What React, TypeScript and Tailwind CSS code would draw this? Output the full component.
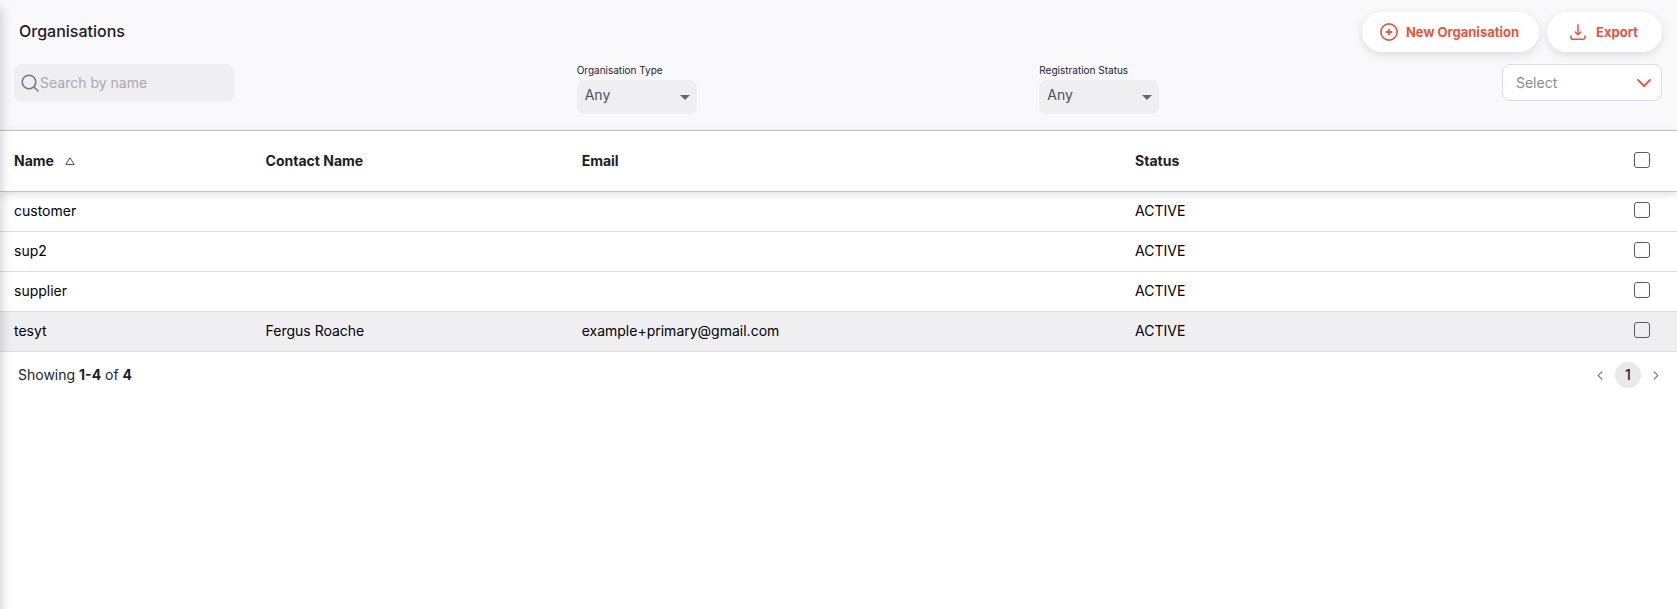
import { useState } from "react";

type Organisation = {
  name: string;
  contact: string;
  email: string;
  status: string;
};

const organisations: Organisation[] = [
  { name: "customer", contact: "", email: "", status: "ACTIVE" },
  { name: "sup2", contact: "", email: "", status: "ACTIVE" },
  { name: "supplier", contact: "", email: "", status: "ACTIVE" },
  { name: "tesyt", contact: "Fergus Roache", email: "example+primary@gmail.com", status: "ACTIVE" },
];

function PlusCircleIcon() {
  return (
    <svg className="size-[18px]" viewBox="0 0 18 18" fill="none" stroke="currentColor" strokeWidth="1.7" strokeLinecap="round" aria-hidden="true">
      <circle cx="9" cy="9" r="8.1" />
      <path d="M9 6.4v5.2M6.4 9h5.2" strokeWidth="1.8" />
    </svg>
  );
}

function DownloadIcon() {
  return (
    <svg className="size-4" viewBox="0 0 16 16" fill="none" stroke="currentColor" strokeWidth="1.5" strokeLinecap="round" strokeLinejoin="round" aria-hidden="true">
      <path d="M8 .8v9.8M5.2 8 8 10.8 10.8 8" />
      <path d="M1 12v1.4a1.8 1.8 0 0 0 1.8 1.8h10.4a1.8 1.8 0 0 0 1.8-1.8V12" />
    </svg>
  );
}

function SearchIcon() {
  return (
    <svg className="size-[18px] shrink-0 text-[#77758c]" viewBox="0 0 18 18" fill="none" stroke="currentColor" strokeWidth="1.6" strokeLinecap="round" aria-hidden="true">
      <circle cx="8" cy="8" r="6.8" />
      <path d="m13 13 4 4" />
    </svg>
  );
}

function FilterSelect({ id, label }: { id: string; label: string }) {
  return (
    <div className="flex w-[120px] flex-col">
      <label htmlFor={id} className="pb-1 text-[10px] leading-3 whitespace-nowrap text-[#23222e]">
        {label}
      </label>
      <div className="relative">
        <select
          id={id}
          className="block h-[34px] w-full appearance-none rounded-lg bg-[#efeff1] pr-6 pb-1 pl-2 text-sm text-[#4e4b66]"
        >
          <option>Any</option>
        </select>
        <svg className="pointer-events-none absolute top-[15px] right-[7px] h-[5px] w-[10px] text-[#666]" viewBox="0 0 10 5" fill="currentColor" aria-hidden="true">
          <path d="M0 0h10L5 5z" />
        </svg>
      </div>
    </div>
  );
}

const checkboxClass =
  "block size-4 appearance-none rounded-[3px] border border-[#5a5a5a] bg-transparent checked:bg-[#e2583e]";
const pillClass =
  "flex h-10 items-center rounded-full bg-white text-[13px] font-bold text-[#e2583e] shadow-[0_3px_8px_rgba(20,20,43,0.13)]";

export default function App() {
  const [selected, setSelected] = useState<string[]>([]);
  const allSelected = selected.length === organisations.length;

  const toggle = (name: string) =>
    setSelected((current) =>
      current.includes(name) ? current.filter((item) => item !== name) : [...current, name],
    );

  return (
    <main className="relative min-h-screen overflow-hidden bg-white font-['Inter',sans-serif] text-sm text-black">
      <div
        aria-hidden="true"
        className="pointer-events-none absolute top-2 -bottom-4 -left-4 z-10 w-4 shadow-[0_0_12px_rgba(20,20,43,0.26)]"
      />

      <header className="h-[131px] border-b border-[#c3c3c8] bg-[#f9f9fc] pt-3 pr-[15px] pl-[14px]">
        <div className="flex items-center justify-between pl-[5px]">
          <h1 className="pb-[2px] text-base font-medium text-[#1d1d22]">Organisations</h1>
          <div className="flex gap-2">
            <button type="button" className={`${pillClass} gap-2 pr-5 pl-[18px]`}>
              <PlusCircleIcon />
              New Organisation
            </button>
            <button type="button" className={`${pillClass} gap-[10px] pr-6 pl-[23px]`}>
              <DownloadIcon />
              Export
            </button>
          </div>
        </div>

        <div className="mt-3 flex items-start justify-between">
          <div className="flex h-[38px] w-[220px] items-center rounded-lg bg-[#efeff1] pl-[7px]">
            <SearchIcon />
            <input
              type="text"
              aria-label="Search by name"
              placeholder="Search by name"
              className="h-full w-full min-w-0 bg-transparent pb-[2px] pl-px text-sm outline-none placeholder:text-[#a9a8b6]"
            />
          </div>
          <FilterSelect id="organisation-type" label="Organisation Type" />
          <FilterSelect id="registration-status" label="Registration Status" />
          <div className="relative w-[160px]">
            <select
              aria-label="Select"
              className="block h-[37px] w-full appearance-none rounded-lg border border-[#d9dbe9] bg-white pr-8 pl-[13px] text-sm text-[#8a889c]"
            >
              <option>Select</option>
            </select>
            <svg className="pointer-events-none absolute top-[15px] right-[11px] h-2 w-[14px] text-[#e2583e]" viewBox="0 0 14 8" fill="none" stroke="currentColor" strokeWidth="1.8" strokeLinecap="round" strokeLinejoin="round" aria-hidden="true">
              <path d="m1 1 6 6 6-6" />
            </svg>
          </div>
        </div>
      </header>

      <table className="w-full table-fixed border-separate border-spacing-0 text-left">
        <colgroup>
          <col className="w-[15%]" />
          <col className="w-[18.85%]" />
          <col className="w-[33%]" />
          <col />
          <col className="w-[57px]" />
        </colgroup>
        <thead className="relative shadow-[0_2px_8px_rgba(20,20,43,0.14)] [&_th]:h-[61px] [&_th]:border-b [&_th]:border-[#c3c3c8] [&_th]:bg-white [&_th]:px-[14px] [&_th]:font-bold [&_th]:text-[#1d1d22] [&_th:last-child]:pb-[3px]">
          <tr>
            <th scope="col" aria-sort="ascending">
              <button type="button" className="flex items-center gap-[11px] font-bold">
                Name
                <svg className="h-2 w-[10px] text-[#4e4b66]" viewBox="0 0 10 8" fill="none" stroke="currentColor" strokeLinejoin="round" aria-hidden="true">
                  <path d="M5 .8 9.2 7.4H.8z" />
                </svg>
              </button>
            </th>
            <th scope="col">Contact Name</th>
            <th scope="col">Email</th>
            <th scope="col">Status</th>
            <th scope="col">
              <input
                type="checkbox"
                aria-label="Select all organisations"
                className={checkboxClass}
                checked={allSelected}
                onChange={() => setSelected(allSelected ? [] : organisations.map((o) => o.name))}
              />
            </th>
          </tr>
        </thead>
        <tbody className="[&_td]:h-10 [&_td]:border-b [&_td]:border-[#dcdce2] [&_td]:px-[14px] [&_td]:pb-[2px] [&_td:last-child]:pb-[3px] [&_tr:last-child]:bg-[#efeff2]">
          {organisations.map((o) => (
            <tr key={o.name}>
              <td>{o.name}</td>
              <td>{o.contact}</td>
              <td>{o.email}</td>
              <td>{o.status}</td>
              <td>
                <input
                  type="checkbox"
                  aria-label={`Select ${o.name}`}
                  className={checkboxClass}
                  checked={selected.includes(o.name)}
                  onChange={() => toggle(o.name)}
                />
              </td>
            </tr>
          ))}
        </tbody>
      </table>

      <footer className="flex items-center justify-between pt-[10px] pr-[14px] pl-[18px] text-[#1d1d2b]">
        <p>
          Showing <b>1-4</b> of <b>4</b>
        </p>
        <nav aria-label="Pagination" className="flex items-center gap-2">
          <button type="button" aria-label="Previous page" className="flex w-[14px] justify-center text-[#8c8c8c]">
            <svg className="h-[9px] w-[6px]" viewBox="0 0 6 9" fill="none" stroke="currentColor" strokeWidth="1.4" aria-hidden="true">
              <path d="M5.2.6 1.2 4.5l4 3.9" />
            </svg>
          </button>
          <button type="button" aria-current="page" className="size-[26px] rounded-full bg-[#e9e9e9] font-medium">
            1
          </button>
          <button type="button" aria-label="Next page" className="flex w-[14px] justify-center text-[#8c8c8c]">
            <svg className="h-[9px] w-[6px]" viewBox="0 0 6 9" fill="none" stroke="currentColor" strokeWidth="1.4" aria-hidden="true">
              <path d="m.8.6 4 3.9-4 3.9" />
            </svg>
          </button>
        </nav>
      </footer>
    </main>
  );
}
